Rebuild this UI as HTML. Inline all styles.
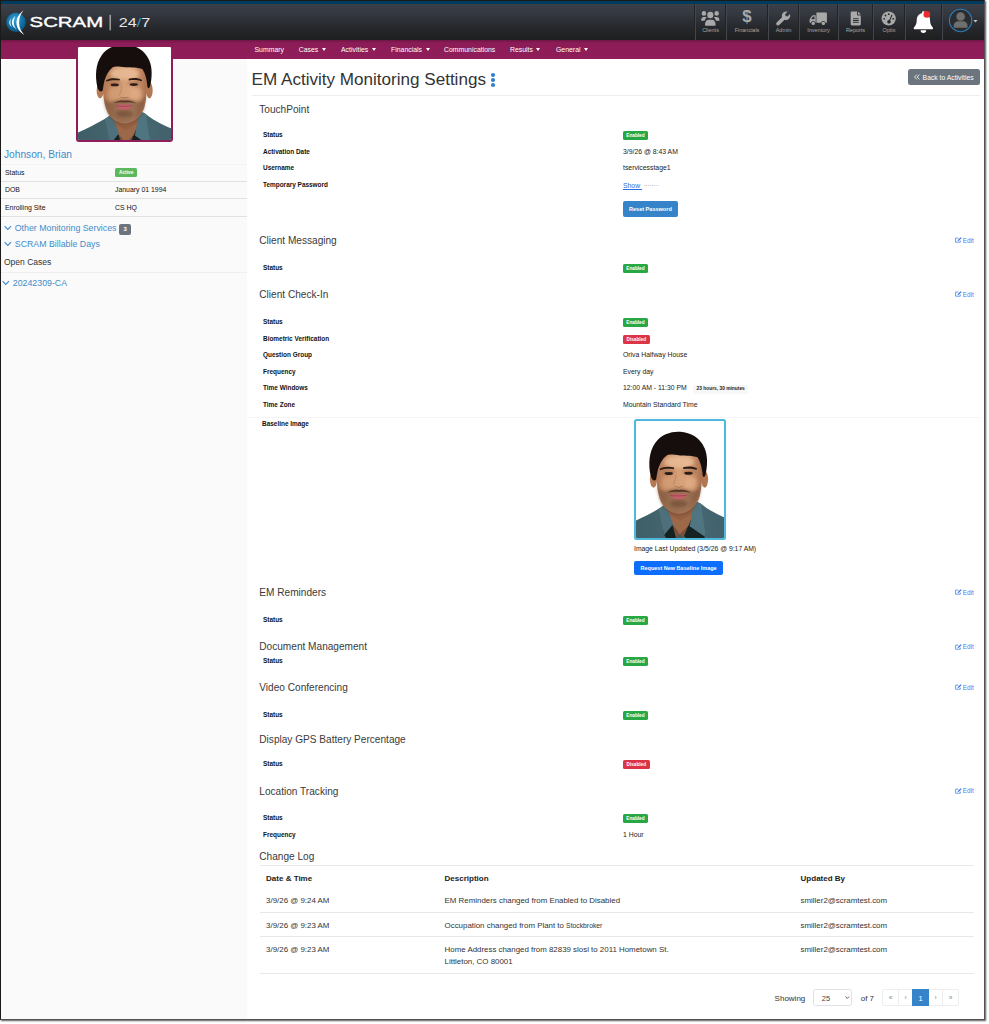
<!DOCTYPE html>
<html lang="en">
<head>
<meta charset="utf-8">
<title>EM Activity Monitoring Settings</title>
<style>
*{box-sizing:border-box;margin:0;padding:0}
html,body{width:989px;height:1024px;background:#fff;overflow:hidden}
body{font-family:"Liberation Sans",Arial,sans-serif;color:#222;position:relative}
#frame{position:absolute;left:0;top:0;width:985px;height:1020px;background:#fff;overflow:hidden}
#edge{position:absolute;left:0;top:0;width:985px;height:1020px;border:1px solid #1a1a1a;border-right-color:#525252;border-bottom-color:#525252;box-shadow:1px 1px 1.5px rgba(0,0,0,.65);pointer-events:none}
#frame>*{position:absolute}
/* header */
#hdr{left:0;top:1px;width:985px;height:39px;background:linear-gradient(#3b4049 0%,#33373e 30%,#26282c 65%,#1e1e1f 100%);border-top:3px solid #003b5e}
#hdr>*{position:absolute}
#bar{left:0;top:40px;width:985px;height:19px;background:linear-gradient(#6f1645 0,#8c1c57 3px,#8f1d59 100%)}
#bar>*{position:absolute}
.nav{top:0;height:19px;line-height:19px;font-size:6.9px;color:#fff;white-space:nowrap}
.nav i{display:inline-block;width:0;height:0;border-left:2.8px solid transparent;border-right:2.8px solid transparent;border-top:3.2px solid #fff;margin-left:3.5px;vertical-align:.8px}

.sep{top:0;width:2px;height:36px;background:linear-gradient(90deg,#1f2124 0,#1f2124 50%,#454a52 50%,#454a52 100%);opacity:.9}
.ico{top:0;height:36px;text-align:center;color:#a9a9a9}
.ico svg{position:absolute;left:0;top:0;width:100%;height:36px;overflow:visible}
.ico b{position:absolute;left:0;right:0;top:23px;font-weight:400;font-size:5.6px;line-height:7px;color:#a4a4a4;letter-spacing:-.05px}
#logo{left:5px;top:5px;width:150px;height:26px;overflow:visible}
/* sidebar */
#side{left:0;top:59px;width:247px;height:961px;background:#fafafa}
#side>*{position:absolute}

#photo{left:76px;top:45px;width:96.800px;height:97px;background:#8f1d59;border-radius:3px;padding:1.900px}
#photo svg{display:block;width:93px;height:93.200px;border-radius:1px}
.sname{left:4px;top:147.500px;font-size:10.200px;line-height:14px;color:#428bca;white-space:nowrap}
.srow{left:1px;width:246px;height:17.400px;border-top:1px solid #dfe1e3;font-size:6.900px;line-height:17.400px;color:#111}
.srow span{position:absolute;left:4px;top:0;white-space:nowrap}
.srow span+span{left:114px}
.badge{display:inline-block;font-weight:700;color:#fff;border-radius:1.500px;text-align:center;white-space:nowrap}
.slink{left:4px;font-size:8.800px;line-height:12px;color:#428bca;white-space:nowrap}
.slink svg{display:inline-block;width:7.600px;height:5.400px;margin-right:3.200px;vertical-align:.4px;overflow:visible}
#main{left:247px;top:59px;width:738px;height:961px;background:#fff}
#main>*{position:absolute}
.title{left:4.600px;top:10px;font-size:17.100px;font-weight:400;line-height:22px;color:#333;white-space:nowrap;letter-spacing:-.01px}
.kebab{display:inline-block;position:relative;width:4px;height:14px;margin-left:5.500px;vertical-align:-2.300px}
.kebab i{position:absolute;left:0;width:3.600px;height:3.600px;border-radius:50%;background:#3583c9}
.kebab i:nth-child(1){top:0}.kebab i:nth-child(2){top:4.900px}.kebab i:nth-child(3){top:9.800px}
.back{left:661px;top:9.800px;width:72.200px;height:16.600px;border-radius:2.500px;background:#6c757d;color:#fff;font-size:6.800px;line-height:17.600px;white-space:nowrap;padding-left:6.300px}
.back svg{display:inline-block;width:6px;height:6px;margin-right:2.300px;vertical-align:-.7px}
.hr{border:0;height:1px;background:#edeef0}
.h{left:12.300px;font-size:10.100px;font-weight:400;line-height:14px;color:#3a3a3a;white-space:nowrap}
.edit{left:708px;font-size:6.300px;line-height:10px;color:#3b7ff5;white-space:nowrap}
.edit svg{display:inline-block;width:7px;height:6px;margin-right:.8px;vertical-align:-.5px;overflow:visible}
.row{left:0;width:738px;height:10px}
.row span{position:absolute;top:0;white-space:nowrap;line-height:10px}
.lbl{font-size:6.450px;font-weight:700;color:#111}
.row .val{left:376px;font-size:6.850px;color:#222}
.row .val span,.row .val a{position:static}
.badge.en,.badge.dis{position:absolute;left:-.3px;top:1.300px;height:9px;display:block;padding-top:1.800px;line-height:6px;font-size:4.700px;border-radius:1.600px}
.badge.en{width:25.400px;background:#28a745}
.badge.dis{width:27.200px;background:#dc3545}
.show{color:#2a6fe0;text-decoration:underline}
.dots{color:#555;font-size:5.500px;letter-spacing:.1px;vertical-align:1.200px}
.dur{display:inline-block;margin-left:6.500px;padding:0 3.300px;height:8.500px;line-height:8.500px;font-size:4.850px;font-weight:700;color:#222;background:#f6f7f8;border-radius:1.500px;vertical-align:.3px}
.btn{color:#fff;font-weight:700;text-align:center;white-space:nowrap;border-radius:2px}
.reset{width:55.400px;height:15.400px;line-height:16.200px;font-size:5.550px;background:#3583c9}
.req{width:89px;height:14.700px;line-height:14.500px;font-size:5.500px;background:#0d6efd}
.bimg{width:91.800px;height:121.200px;padding:1.800px;border-radius:2.500px;background:#4fb9dd;overflow:hidden}
.bimg svg{display:block;width:88.200px;height:117.600px;border-radius:.8px}
.cap{font-size:6.800px;line-height:10px;color:#222;white-space:nowrap}
.log{left:12.800px;top:806px;width:714.500px;border-collapse:collapse;font-size:7.900px;color:#333;table-layout:fixed}
.log th{text-align:left;font-weight:700;font-size:8px;color:#222;height:22.500px;padding:3px 0 0 6.300px;vertical-align:middle;border-top:1px solid #e6e9ec}
.log td{padding:7.100px 0 0 6.300px;vertical-align:top;line-height:12.400px;border-bottom:1px solid #e6e9ec}
.log thead tr{height:22.500px}
.log small{font-size:6.800px}
.pager{left:0;top:930px;width:738px;height:17px;font-size:8px;color:#333}
.pager>*{position:absolute;top:0;height:16.700px;line-height:19.500px;white-space:nowrap}
.sel{width:39.600px;border:1px solid #dee2e6;border-radius:2.500px;padding-left:8px;font-size:7.500px;color:#444;line-height:17.500px}
.sel svg{position:absolute;right:1.600px;top:6.300px;width:4.500px;height:3px}
.pg{border:1px solid #eceef0;text-align:center;font-size:6.500px;color:#7d838a;line-height:16.500px}
.pg.on{background:#3583c9;border-color:#3583c9;color:#fff;font-size:7.500px;line-height:17px;z-index:1}

</style>
</head>
<body>
<svg width="0" height="0" style="position:absolute">
  <defs>
    <filter id="b1" x="-10%" y="-10%" width="120%" height="120%"><feGaussianBlur stdDeviation=".7"/></filter>
    <filter id="b2" x="-20%" y="-20%" width="140%" height="140%"><feGaussianBlur stdDeviation="1.6"/></filter>
    <filter id="b3" x="-30%" y="-30%" width="160%" height="160%"><feGaussianBlur stdDeviation="2.6"/></filter>
    <linearGradient id="sk" x1="0" y1="0" x2="1" y2="0"><stop offset="0" stop-color="#ae7450"/><stop offset=".3" stop-color="#d09a72"/><stop offset=".68" stop-color="#dba47c"/><stop offset="1" stop-color="#a86e4c"/></linearGradient>
    <linearGradient id="sh" x1="0" y1="0" x2="1" y2="0"><stop offset="0" stop-color="#3d5c65"/><stop offset=".5" stop-color="#486872"/><stop offset="1" stop-color="#41626b"/></linearGradient>
    <g id="face">
      <rect x="-10" y="-5" width="110" height="130" fill="#fff"/>
      <g filter="url(#b1)">
        <!-- shirt -->
        <path d="M-10 104.500C4 98 15 92.500 22.500 88L30 84 58 80 65 83C72 89 82 94.500 100 101.500V125H-10Z" fill="url(#sh)"/>
        <!-- neck -->
        <path d="M27 72 61 70 60.500 92 52 106 43.500 114 36 104 27.500 90Z" fill="#9c6747"/>
        <path d="M28 80 60 78 58 92 44 100 30 92Z" fill="#8f5d40" opacity=".55"/>
        <!-- collar shadows -->
        <path d="M28.500 93 36 104 42 112 40 118 30 118 27.500 113Z" fill="#10181b" opacity=".9"/>
        <path d="M58.500 90 52.500 105 46 113 50 118 68 118 70 115Z" fill="#10181b" opacity=".9"/>
        <path d="M36.500 104.500 43.500 114 52 105.500 47 118 40 118Z" fill="#7b4f38"/>
        <!-- collar leaves -->
        <path d="M22.500 88 29.500 83 37 103.500 28 114.500Z" fill="#4d707b"/>
        <path d="M65 83 58.500 79.500 53.500 105.500 70 117Z" fill="#507480"/>
        <path d="M40 118 43.500 113.500 47.500 118Z" fill="#3c5a63"/>
        <!-- ears -->
        <ellipse cx="17.300" cy="58.500" rx="3.600" ry="8.400" fill="#b87a54"/>
        <ellipse cx="68.700" cy="58.500" rx="3.400" ry="8.400" fill="#b37650"/>
        <!-- face -->
        <path d="M20 44C20 32 30 28 42.500 28S66 32 66 45C66.500 56 66 66 63.500 76 60.500 86 51 93 43 93 35 93 26.500 87 23.500 78 20.500 68 19.500 55 20 44Z" fill="url(#sk)"/>
      </g>
      <!-- beard -->
      <g filter="url(#b2)">
        <path d="M20.500 64C22 74 24 82 28 87 33 92.500 39 94 43 94 48 94 54.500 91.500 59 86 62.500 81 64.500 72 65.500 63 62 70 58 72 54.500 69.500 50 67 36 67 31.500 69.500 27.500 72 23.500 70 20.500 64Z" fill="#5d3d2c" opacity=".5"/>
        <ellipse cx="32.500" cy="51" rx="6.500" ry="3.200" fill="#9a6243" opacity=".45"/>
        <ellipse cx="52.500" cy="50.800" rx="6.500" ry="3.200" fill="#9a6243" opacity=".45"/>
        <ellipse cx="42.800" cy="83" rx="9" ry="3.500" fill="#4a2f22" opacity=".35"/>
        <ellipse cx="43" cy="41" rx="15" ry="6" fill="#edc09c" opacity=".7"/>
        <ellipse cx="56" cy="62" rx="5" ry="6" fill="#e8b48e" opacity=".6"/>
        <ellipse cx="29.500" cy="62" rx="4" ry="5.500" fill="#dca57d" opacity=".5"/>
      </g>
      <g filter="url(#b1)">
        <!-- hair -->
        <path d="M14.500 55C12 44 12.500 31 19 22 25 13 36 10.200 44 10.800 55 11.500 64 17 68.500 27 72 35 71.500 45 69.500 54 68.500 57 67 57 66.500 54 66 47 64.500 41 61.500 36.500 57 34.500 50 35 44 34.500 38 34 33 33 30.500 34.500 26 38 23.500 43 22 48 21 52 20.500 56 20 58.500 18.500 61 15.500 59.500 14.500 55Z" fill="#17110f"/>
        <!-- brows -->
        <path d="M23.500 48C27 45.500 33 45.300 38 46.600L37.600 48.300C33 47.600 28 47.800 24 49.300Z" fill="#2a1a12"/>
        <path d="M47 46.500C52 45.200 57 45.400 61 47.600L60.600 49C57 47.700 52 47.500 47.300 48.200Z" fill="#2a1a12"/>
        <!-- eyes -->
        <ellipse cx="32.600" cy="52.800" rx="4.200" ry="1.500" fill="#2d1c14"/>
        <ellipse cx="52.400" cy="52.500" rx="4.200" ry="1.500" fill="#2d1c14"/>
        <!-- nose -->
        <path d="M38 65C40 66.500 45 66.500 47.500 65 46 67.300 39.500 67.300 38 65Z" fill="#8a5a3f"/>
        <path d="M40 54C39.500 58 38.500 61 37.500 64" stroke="#b98460" stroke-width="1.200" fill="none" opacity=".7"/>
        <!-- moustache -->
        <path d="M31.500 72C35 69 40 68.600 43 69.400 46 68.600 51 69 54.500 72 51 70.800 47 70.800 43 71.200 39 70.800 35 70.800 31.500 72Z" fill="#4a2f22" opacity=".9"/>
        <!-- lips -->
        <path d="M33.500 74.500C37 72.600 40.500 72.800 42.500 73.400 44.500 72.800 48 72.600 51 74.500 48.500 77.800 45 78.600 42.300 78.600 39.500 78.600 36 77.800 33.500 74.500Z" fill="#c2606b"/>
        <path d="M34 74.700C38 75.300 46 75.300 50.600 74.600" stroke="#8e3b45" stroke-width=".7" fill="none"/>
      </g>
    </g>
  </defs>
</svg>
<div id="frame">
  <div id="hdr">
    <svg id="logo" viewBox="0 0 150 26">
      <defs>
        <radialGradient id="gl" cx="45%" cy="35%" r="65%"><stop offset="0" stop-color="#3aa6dc"/><stop offset=".55" stop-color="#1377ab"/><stop offset="1" stop-color="#0b5680"/></radialGradient>
      </defs>
      <g transform="translate(0 .9)"><circle cx="11" cy="12.500" r="9.700" fill="url(#gl)"/>
      <path d="M18.500 0.5C9 7 9 19 19.500 25C12.500 18.500 12.500 7.500 18.500 0.5Z" fill="#fff"/>
      <path d="M10.400 6.200C5.400 10.400 5.600 15.600 11.600 19.600C8.200 15.400 8 10.800 10.400 6.200Z" fill="#f4fafd"/>
      <path d="M6 8.600C3.400 11.400 3.600 14.400 6.800 17C5.100 14.100 5 11.400 6 8.600Z" fill="#e6f3fa"/></g>
      <text x="24.6" y="18.100" font-family="'Liberation Sans',Arial,sans-serif" font-size="14" font-weight="400" fill="#fff" stroke="#fff" stroke-width=".35" textLength="73.5" lengthAdjust="spacingAndGlyphs">SCRAM</text>
      <rect x="104.6" y="5.800" width="1.1" height="15.500" fill="#c9c9c9"/>
      <text x="113.8" y="18.300" font-family="'Liberation Sans',Arial,sans-serif" font-size="13" fill="#e6e6e6" textLength="31.5" lengthAdjust="spacingAndGlyphs">24<tspan fill="#2a9ad6">/</tspan>7</text>
    </svg>
    <i class="sep" style="left:694px"></i><i class="sep" style="left:725px"></i><i class="sep" style="left:767px"></i><i class="sep" style="left:798px"></i><i class="sep" style="left:837px"></i><i class="sep" style="left:872px"></i><i class="sep" style="left:904px"></i><i class="sep" style="left:941px"></i>
    <div class="ico" style="left:696px;width:29px"><svg viewBox="0 0 29 36"><g fill="#a9a9a9" transform="translate(14.300 16.500) scale(1.06 1.130) translate(-14.300 -16)"><circle cx="14.3" cy="11.2" r="2.9"/><path d="M9.4 20.6v-1.7c0-2.2 1.7-3.6 3.6-3.6h2.6c1.900 0 3.600 1.400 3.600 3.600v1.700z"/><circle cx="8.300" cy="9.700" r="2.100"/><circle cx="20.300" cy="9.700" r="2.100"/><path d="M5.700 15.700c0-1.600 1.100-2.700 2.400-2.700h1.400c.5 0 .9.100 1.300.400-.9.700-1.600 1.700-1.800 2.900H5.700z"/><path d="M22.900 15.700c0-1.600-1.100-2.700-2.400-2.700h-1.400c-.5 0-.9.100-1.300.400.9.700 1.600 1.700 1.800 2.900h3.300z"/></g></svg><b>Clients</b></div>
    <div class="ico" style="left:727px;width:40px"><span style="position:absolute;left:0;right:0;top:4.200px;font-size:16.800px;font-weight:700;line-height:18px;color:#a9a9a9">$</span><b>Financials</b></div>
    <div class="ico" style="left:769px;width:29px"><svg viewBox="0 0 29 36"><path fill="#a9a9a9" d="M20.900 10.100l-2.300 2.300-2-.4-.4-2 2.300-2.300c-1.500-.500-3.200-.100-4.400 1.100-1.200 1.200-1.500 2.900-1 4.400l-5.400 5.400c-.7.700-.7 1.800 0 2.500s1.800.7 2.500 0l5.400-5.400c1.500.5 3.200.2 4.400-1 1.200-1.200 1.500-3 .900-4.600zM9 22.200c-.4 0-.7-.3-.7-.7s.3-.7.700-.7.700.3.700.700-.3.700-.700.700z"/></svg><b>Admin</b></div>
    <div class="ico" style="left:800px;width:37px"><svg viewBox="0 0 37 36"><g fill="#a9a9a9"><path d="M16.400 8.500h9.300c.7 0 1.200.5 1.200 1.200v9.100h-1.300a2.300 2.300 0 0 0-4.500 0h-4.700z"/><path d="M15.700 11.300h-2.600c-.4 0-.8.200-1 .5l-2.200 3c-.2.300-.3.600-.3.900v3.100h1.400a2.300 2.300 0 0 1 4.500 0h.2zm-1.200 1.200v2.700h-3.400l1.800-2.500c.1-.1.200-.2.400-.2z" fill-rule="evenodd"/><circle cx="13.250" cy="19.400" r="1.700"/><circle cx="23.350" cy="19.400" r="1.700"/></g></svg><b>Inventory</b></div>
    <div class="ico" style="left:839px;width:33px"><svg viewBox="0 0 33 36"><path fill="#a9a9a9" fill-rule="evenodd" d="M12.900 7.600h5.100v3c0 .5.400.9.900.9h2.900v8.700c0 .7-.5 1.200-1.200 1.200h-7.700c-.7 0-1.200-.5-1.200-1.200V8.800c0-.7.500-1.200 1.200-1.200zm6.100 0l2.800 2.900H19zM14 14.200v1h5.700v-1zm0 1.800v1h5.700v-1zm0 1.800v1h5.700v-1z"/></svg><b>Reports</b></div>
    <div class="ico" style="left:874px;width:30px"><svg viewBox="0 0 30 36"><g><circle cx="14.700" cy="14.500" r="7.100" fill="#a9a9a9"/><g fill="#26282c"><circle cx="10.200" cy="14.800" r=".9"/><circle cx="11.500" cy="11.500" r=".9"/><circle cx="14.700" cy="10.200" r=".9"/><circle cx="19.200" cy="14.800" r=".9"/><path d="M17.600 10.600l.9.400-2.300 5.400a1.800 1.800 0 1 1-.9-.4z"/></g></g></svg><b>Optix</b></div>
    <svg style="left:906px;top:-.8px;width:35px;height:36px" viewBox="0 0 35 36"><path fill="#fff" transform="translate(17.400 18.700) scale(1.120 1.080) translate(-17 -18)" d="M17 8.400c.7 0 1.200.5 1.200 1.200v.5c2.900.600 4.700 3 4.700 6.100 0 3.500 1.100 5.600 2.500 7.100.600.700.100 1.700-.8 1.700H9.400c-.9 0-1.400-1-.8-1.700 1.400-1.500 2.500-3.600 2.500-7.100 0-3.100 1.800-5.500 4.700-6.100v-.5c0-.7.500-1.200 1.200-1.200zM14.500 26h5a2.500 2.500 0 0 1-5 0z"/><circle cx="20.800" cy="11.400" r="3.300" fill="#ee2a2a"/></svg>
    <svg style="left:943px;top:-.8px;width:40px;height:36px" viewBox="0 0 40 36"><circle cx="17.600" cy="17.500" r="11.200" fill="#2a2c30" stroke="#2b7fc0" stroke-width="1.100"/><circle cx="17.600" cy="13.500" r="4.300" fill="#6f6f6f"/><path d="M10.700 24.300v-1.500c0-3 2.300-4.600 4.700-4.600h4.400c2.400 0 4.700 1.600 4.700 4.600v1.500c0 .3-.2.500-.500.500H11.200c-.3 0-.5-.2-.5-.5z" fill="#6f6f6f"/><path d="M30.400 17l2.100 2.600 2.100-2.600z" fill="#c4c4c4"/></svg>
  </div>
  <div id="bar">
    <span class="nav" style="left:254.5px">Summary</span>
    <span class="nav" style="left:298.7px">Cases<i></i></span>
    <span class="nav" style="left:341.0px">Activities<i></i></span>
    <span class="nav" style="left:391.0px">Financials<i></i></span>
    <span class="nav" style="left:444.0px">Communications</span>
    <span class="nav" style="left:510.0px">Results<i></i></span>
    <span class="nav" style="left:556.0px">General<i></i></span>
  </div>
  <div id="side">
    <div class="sname" style="top:88.500px">Johnson, Brian</div>
    <div class="srow" style="top:104.500px;border-top-color:#f3f4f5;line-height:15.600px"><span>Status</span><span><b class="badge" style="background:#5cb85c;font-size:4.800px;line-height:5px;padding-top:2.100px;width:22.300px;height:9.400px;position:absolute;left:0;top:3.600px">Active</b></span></div>
    <div class="srow" style="top:122.100px;line-height:16.600px"><span>DOB</span><span>January 01 1994</span></div>
    <div class="srow" style="top:139.300px"><span>Enrolling Site</span><span>CS HQ</span></div>
    <div class="srow" style="top:156.700px;height:1px"></div>
    <div class="slink" style="top:163px"><svg viewBox="0 0 7 5"><path d="M.5 1 3.500 4 6.500 1" fill="none" stroke="#428bca" stroke-width="1.100"/></svg>Other Monitoring Services<b class="badge" style="background:#6c757d;font-size:6px;line-height:10.500px;width:11.800px;height:10.800px;border-radius:2px;margin-left:2.800px;vertical-align:.3px">3</b></div>
    <div class="slink" style="top:178.500px"><svg viewBox="0 0 7 5"><path d="M.5 1 3.500 4 6.500 1" fill="none" stroke="#428bca" stroke-width="1.100"/></svg>SCRAM Billable Days</div>
    <div class="slink" style="top:197px;color:#333;font-size:8.500px">Open Cases</div>
    <div class="srow" style="top:213px;height:1px;border-top-color:#eceef0"></div>
    <div class="slink" style="left:2px;top:218px"><svg viewBox="0 0 7 5"><path d="M.5 1 3.500 4 6.500 1" fill="none" stroke="#428bca" stroke-width="1.100"/></svg>20242309-CA</div>
  </div>
  <div id="photo"><svg viewBox="-5.700 13.400 96.900 96.900"><use href="#face"/></svg></div>
  <div id="main">
    <h1 class="title">EM Activity Monitoring Settings<i class="kebab"><i></i><i></i><i></i></i></h1>
    <a class="back"><svg viewBox="0 0 6 6"><path d="M2.800.6.6 3 2.800 5.400M5.400.6 3.200 3 5.400 5.400" fill="none" stroke="#fff" stroke-width=".8"/></svg>Back to Activities</a>
    <hr class="hr" style="top:36px;left:5px;width:728px">
    <h2 class="h" style="top:44.4px">TouchPoint</h2>
    <div class="row" style="top:70.8px"><span class="lbl" style="left:16px">Status</span><span class="val"><b class="badge en">Enabled</b></span></div>
    <div class="row" style="top:87.5px"><span class="lbl" style="left:16px">Activation Date</span><span class="val">3/9/26 @ 8:43 AM</span></div>
    <div class="row" style="top:104.2px"><span class="lbl" style="left:16px">Username</span><span class="val">tservicesstage1</span></div>
    <div class="row" style="top:120.6px"><span class="lbl" style="left:16px">Temporary Password</span><span class="val"><a class="show">Show&nbsp;</a><span class="dots">&nbsp;········</span></span></div>
    <a class="btn reset" style="left:375.7px;top:142.4px">Reset Password</a>
    <h2 class="h" style="top:175.1px">Client Messaging</h2>
    <a class="edit" style="top:176.9px"><svg viewBox="0 0 7 6"><path d="M5.300 3.600V5.200H.6V1.100H3.400" fill="none" stroke="#3d84f7" stroke-width=".8"/><path d="M2.600 4.100 2.900 2.900 5.700.2 6.600 1.100 3.800 3.800Z" fill="#2f6fe0"/></svg>Edit</a>
    <div class="row" style="top:203.8px"><span class="lbl" style="left:16px">Status</span><span class="val"><b class="badge en">Enabled</b></span></div>
    <h2 class="h" style="top:228.8px">Client Check-In</h2>
    <a class="edit" style="top:230.6px"><svg viewBox="0 0 7 6"><path d="M5.300 3.600V5.200H.6V1.100H3.400" fill="none" stroke="#3d84f7" stroke-width=".8"/><path d="M2.600 4.100 2.900 2.900 5.700.2 6.600 1.100 3.800 3.800Z" fill="#2f6fe0"/></svg>Edit</a>
    <div class="row" style="top:257.6px"><span class="lbl" style="left:16px">Status</span><span class="val"><b class="badge en">Enabled</b></span></div>
    <div class="row" style="top:274.6px"><span class="lbl" style="left:16px">Biometric Verification</span><span class="val"><b class="badge dis">Disabled</b></span></div>
    <div class="row" style="top:291.2px"><span class="lbl" style="left:16px">Question Group</span><span class="val">Oriva Halfway House</span></div>
    <div class="row" style="top:307.8px"><span class="lbl" style="left:16px">Frequency</span><span class="val">Every day</span></div>
    <div class="row" style="top:324.4px"><span class="lbl" style="left:16px">Time Windows</span><span class="val">12:00 AM - 11:30 PM<b class="dur">23 hours, 30 minutes</b></span></div>
    <div class="row" style="top:341.0px"><span class="lbl" style="left:16px">Time Zone</span><span class="val">Mountain Standard Time</span></div>
    <hr class="hr" style="top:357.500px;left:0;width:733px;background:#f4f5f6">
    <div class="row" style="top:360.1px"><span class="lbl" style="left:15px">Baseline Image</span><span class="val"></span></div>
    <div class="bimg" style="left:387px;top:359.8px"><svg viewBox="0 0 88 118"><use href="#face"/></svg></div>
    <div class="cap" style="left:387px;top:484.5px">Image Last Updated (3/5/26 @ 9:17 AM)</div>
    <a class="btn req" style="left:387.1px;top:501.8px">Request New Baseline Image</a>
    <h2 class="h" style="top:527.1px">EM Reminders</h2>
    <a class="edit" style="top:528.9px"><svg viewBox="0 0 7 6"><path d="M5.300 3.600V5.200H.6V1.100H3.400" fill="none" stroke="#3d84f7" stroke-width=".8"/><path d="M2.600 4.100 2.900 2.900 5.700.2 6.600 1.100 3.800 3.800Z" fill="#2f6fe0"/></svg>Edit</a>
    <div class="row" style="top:555.9px"><span class="lbl" style="left:16px">Status</span><span class="val"><b class="badge en">Enabled</b></span></div>
    <h2 class="h" style="top:581.3px">Document Management</h2>
    <a class="edit" style="top:583.1px"><svg viewBox="0 0 7 6"><path d="M5.300 3.600V5.200H.6V1.100H3.400" fill="none" stroke="#3d84f7" stroke-width=".8"/><path d="M2.600 4.100 2.900 2.900 5.700.2 6.600 1.100 3.800 3.800Z" fill="#2f6fe0"/></svg>Edit</a>
    <div class="row" style="top:596.5px"><span class="lbl" style="left:16px">Status</span><span class="val"><b class="badge en">Enabled</b></span></div>
    <h2 class="h" style="top:621.9px">Video Conferencing</h2>
    <a class="edit" style="top:623.7px"><svg viewBox="0 0 7 6"><path d="M5.300 3.600V5.200H.6V1.100H3.400" fill="none" stroke="#3d84f7" stroke-width=".8"/><path d="M2.600 4.100 2.900 2.900 5.700.2 6.600 1.100 3.800 3.800Z" fill="#2f6fe0"/></svg>Edit</a>
    <div class="row" style="top:650.6px"><span class="lbl" style="left:16px">Status</span><span class="val"><b class="badge en">Enabled</b></span></div>
    <h2 class="h" style="top:673.6px">Display GPS Battery Percentage</h2>
    <div class="row" style="top:699.8px"><span class="lbl" style="left:16px">Status</span><span class="val"><b class="badge dis">Disabled</b></span></div>
    <h2 class="h" style="top:725.5px">Location Tracking</h2>
    <a class="edit" style="top:727.3px"><svg viewBox="0 0 7 6"><path d="M5.300 3.600V5.200H.6V1.100H3.400" fill="none" stroke="#3d84f7" stroke-width=".8"/><path d="M2.600 4.100 2.900 2.900 5.700.2 6.600 1.100 3.800 3.800Z" fill="#2f6fe0"/></svg>Edit</a>
    <div class="row" style="top:753.8px"><span class="lbl" style="left:16px">Status</span><span class="val"><b class="badge en">Enabled</b></span></div>
    <div class="row" style="top:770.8px"><span class="lbl" style="left:16px">Frequency</span><span class="val">1 Hour</span></div>
    <h2 class="h" style="top:790.5px">Change Log</h2>
    <table class="log">
      <thead><tr><th style="width:178.500px">Date &amp; Time</th><th style="width:356px">Description</th><th>Updated By</th></tr></thead>
      <tbody>
        <tr style="height:24.300px"><td>3/9/26 @ 9:24 AM</td><td>EM Reminders changed from Enabled to Disabled</td><td>smiller2@scramtest.com</td></tr>
        <tr style="height:24.200px"><td>3/9/26 @ 9:23 AM</td><td>Occupation changed from Plant to <small>Stockbroker</small></td><td>smiller2@scramtest.com</td></tr>
        <tr style="height:36.900px"><td>3/9/26 @ 9:23 AM</td><td>Home Address changed from 82839 slosl to 2011 Hometown St.<br>Littleton, CO 80001</td><td>smiller2@scramtest.com</td></tr>
      </tbody>
    </table>
    <div class="pager">
      <span class="pt" style="left:527.600px">Showing</span>
      <span class="sel" style="left:565.800px">25<svg viewBox="0 0 5 3"><path d="M.5.500 2.500 2.500 4.500.5" fill="none" stroke="#333" stroke-width=".9"/></svg></span>
      <span class="pt" style="left:613.700px">of 7</span>
      <span class="pg" style="left:635px;width:17px;border-radius:2px 0 0 2px">«</span><span class="pg" style="left:651px;width:15px">‹</span><span class="pg on" style="left:665px;width:17px">1</span><span class="pg" style="left:681px;width:15px">›</span><span class="pg" style="left:695px;width:17px;border-radius:0 2px 2px 0">»</span>
    </div>
  </div>
</div>
<div id="edge"></div>
</body>
</html>
